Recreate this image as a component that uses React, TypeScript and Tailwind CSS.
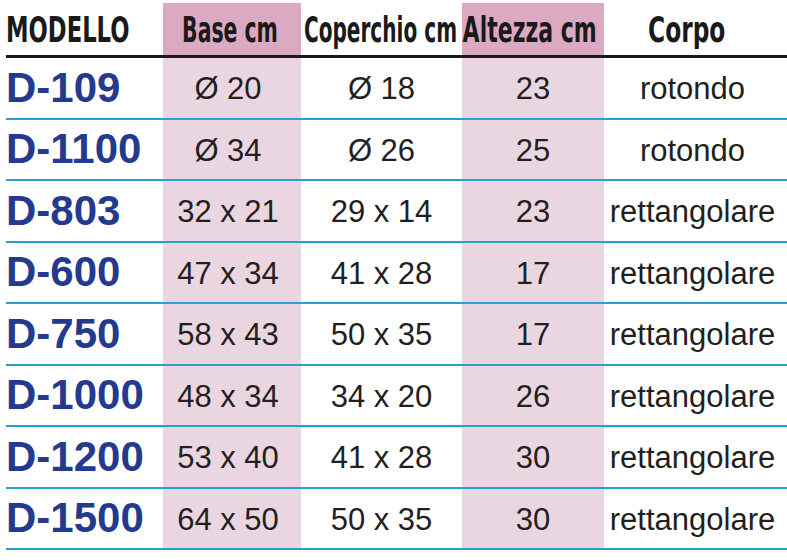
const rows = [
  { model: "D-109", base: "Ø 20", lid: "Ø 18", height: "23", body: "rotondo" },
  { model: "D-1100", base: "Ø 34", lid: "Ø 26", height: "25", body: "rotondo" },
  { model: "D-803", base: "32 x 21", lid: "29 x 14", height: "23", body: "rettangolare" },
  { model: "D-600", base: "47 x 34", lid: "41 x 28", height: "17", body: "rettangolare" },
  { model: "D-750", base: "58 x 43", lid: "50 x 35", height: "17", body: "rettangolare" },
  { model: "D-1000", base: "48 x 34", lid: "34 x 20", height: "26", body: "rettangolare" },
  { model: "D-1200", base: "53 x 40", lid: "41 x 28", height: "30", body: "rettangolare" },
  { model: "D-1500", base: "64 x 50", lid: "50 x 35", height: "30", body: "rettangolare" },
];

const cols = "grid grid-cols-[157px_138px_161px_142px_183px]";
const headFont =
  "font-['Liberation_Sans_Narrow','DejaVu_Sans_Condensed','Liberation_Sans',sans-serif] font-bold text-[36px] text-[#1a1a1a] leading-none whitespace-nowrap inline-block";
const cellFont =
  "font-['Liberation_Sans',Arial,sans-serif] text-[31px] text-[#231f20] leading-none whitespace-nowrap";

// each header is squeezed to the width of the condensed face in the print
const headers = [
  { label: "MODELLO", cell: "justify-start", span: "scale-x-[0.7] origin-left" },
  { label: "Base cm", cell: "justify-center bg-[#dca9c3] pr-[5px]", span: "scale-x-[0.63]" },
  { label: "Coperchio cm", cell: "justify-center pr-[2px]", span: "scale-x-[0.62]" },
  { label: "Altezza cm", cell: "justify-center bg-[#dca9c3] pr-[6px]", span: "scale-x-[0.68]" },
  { label: "Corpo", cell: "justify-center pr-[18px]", span: "scale-x-[0.72]" },
];

export default function App() {
  return (
    <div className="h-[560px] w-[787px] overflow-hidden bg-white pt-[3px] pl-[6px]">
      <div className={`${cols} h-[55px] border-b-[3px] border-[#1a1a1a]`}>
        {headers.map((h) => (
          <div key={h.label} className={`flex min-w-0 items-center pt-[2px] ${h.cell}`}>
            <span className={`${headFont} ${h.span}`}>{h.label}</span>
          </div>
        ))}
      </div>

      {rows.map((r) => (
        <div key={r.model} className={`${cols} h-[61.5px] border-b-2 border-[#2aa0cf]`}>
          <div className="flex items-center">
            <span className="font-['Liberation_Sans',Arial,sans-serif] text-[42px] font-bold leading-none text-[#243a8e]">
              {r.model}
            </span>
          </div>
          <div className="flex items-center justify-center bg-[#ead6e1] pr-[8px] pt-[2px]">
            <span className={cellFont}>{r.base}</span>
          </div>
          <div className="flex items-center justify-center pt-[2px]">
            <span className={cellFont}>{r.lid}</span>
          </div>
          <div className="flex items-center justify-center bg-[#ead6e1] pt-[2px]">
            <span className={cellFont}>{r.height}</span>
          </div>
          <div className="flex items-center justify-center pr-[6px] pt-[2px]">
            <span className={cellFont}>{r.body}</span>
          </div>
        </div>
      ))}
    </div>
  );
}
